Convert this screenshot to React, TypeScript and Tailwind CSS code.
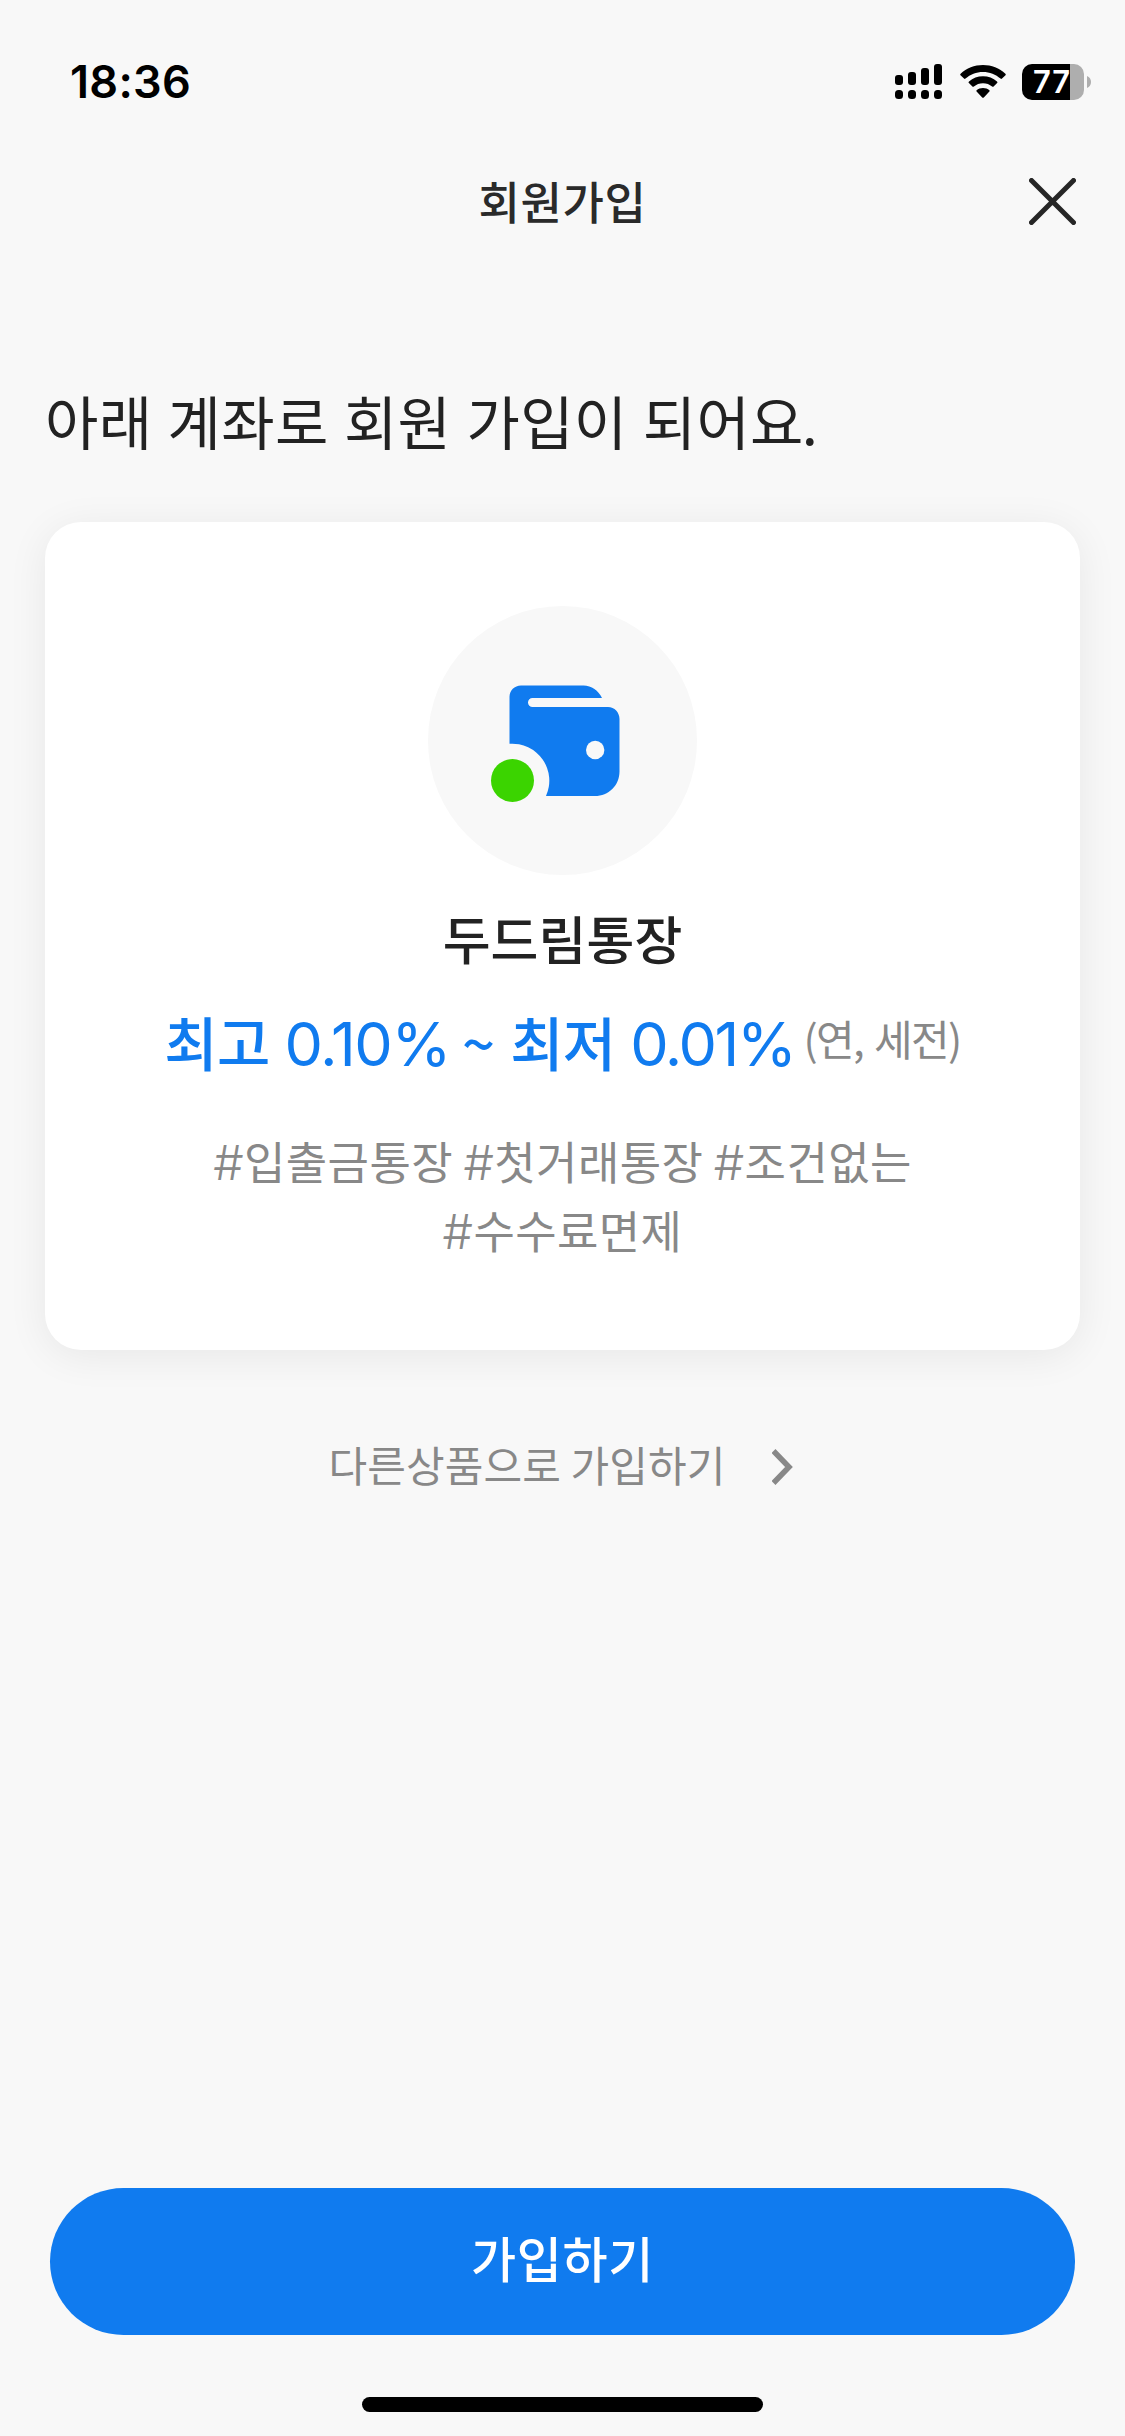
const KR = "font-['Noto_Sans_CJK_KR',sans-serif]";

function StatusBar() {
  return (
    <div className="flex h-[132px] shrink-0 items-center justify-between pt-[32px] pr-[34px] pl-[70px]">
      <span className="font-['Inter',sans-serif] text-[45px] leading-[60px] font-semibold tracking-[0.3px] text-black">
        18:36
      </span>
      <div className="flex items-center">
        <svg width="48" height="36" viewBox="0 0 48 36" fill="#000">
          <rect x="0" y="11" width="8" height="10" rx="3" />
          <rect x="13" y="8" width="8" height="13" rx="3" />
          <rect x="26" y="4" width="8" height="17" rx="3" />
          <rect x="39" y="0" width="8" height="21" rx="3" />
          <rect x="0" y="26" width="8" height="9" rx="3.5" />
          <rect x="13" y="26" width="8" height="9" rx="3.5" />
          <rect x="26" y="26" width="8" height="9" rx="3.5" />
          <rect x="39" y="26" width="8" height="9" rx="3.5" />
        </svg>
        <svg className="ml-[17px]" width="46" height="36" viewBox="0 0 46 36" fill="#000">
          <path d="M23 1C14.500 1 6.500 4.200 .6 9.700C.1 10.200 .1 10.800 .5 11.200L4 14.600C4.400 15 5 15 5.500 14.600C10.200 10.300 16.300 7.900 23 7.900S35.800 10.300 40.500 14.600C41 15 41.600 15 42 14.600L45.500 11.200C45.900 10.800 45.900 10.200 45.400 9.700C39.500 4.200 31.500 1 23 1Z" />
          <path d="M23 12.300C17.700 12.300 12.800 14.200 9 17.500C8.500 18 8.400 18.600 8.900 19L12.400 22.500C12.800 22.900 13.400 22.900 13.900 22.500C16.400 20.400 19.500 19.200 23 19.200S29.600 20.400 32.100 22.500C32.600 22.900 33.200 22.900 33.600 22.500L37.100 19C37.600 18.600 37.500 18 37 17.500C33.200 14.200 28.300 12.300 23 12.300Z" />
          <path d="M23 24C20.500 24 18.300 24.900 16.600 26.300C16.200 26.700 16.200 27.200 16.600 27.600L22.200 33.400C22.700 33.900 23.300 33.900 23.800 33.400L29.400 27.600C29.800 27.200 29.800 26.700 29.400 26.300C27.700 24.900 25.500 24 23 24Z" />
        </svg>
        <div className="ml-[16px] flex h-[36px] w-[62px] items-center overflow-hidden rounded-[10px] bg-[linear-gradient(to_right,#000_48px,#aeaeae_48px)]">
          <span className="pl-[11px] font-['Inter',sans-serif] text-[31px] leading-[36px] font-semibold tracking-[0.8px] text-white">
            77
          </span>
        </div>
        <svg className="ml-[3px]" width="4" height="12" viewBox="0 0 4 12" fill="#aeaeae">
          <path d="M0 0C2.500 1 4 3.300 4 6S2.500 11 0 12Z" />
        </svg>
      </div>
    </div>
  );
}

function Header() {
  return (
    <header className="grid h-[138px] shrink-0 grid-cols-[1fr_auto_1fr] items-center px-[49px]">
      <span />
      <h1 className="text-[45px] leading-[66px] font-medium tracking-[0.6px] text-[#2a2a2a]">회원가입</h1>
      <button className="justify-self-end" aria-label="닫기">
        <svg width="47" height="47" viewBox="0 0 47 47" stroke="#262626" strokeWidth="5" strokeLinecap="round">
          <path d="M2.500 2.500L44.500 44.500M44.500 2.500L2.500 44.500" />
        </svg>
      </button>
    </header>
  );
}

function WalletIcon() {
  return (
    <svg width="269" height="269" viewBox="0.5 0.5 269 269">
      <circle cx="135" cy="135" r="134.500" fill="#f8f8f8" />
      <path
        fill="#107bef"
        d="M82 91.500C82 85 87 80 93.500 80H156C164 80 171 85 174.500 92.500H105A4.500 4.500 0 0 0 105 101.500H180.500C187 101.500 192 107 192 113.500V166C192 180 181 190.500 167.500 190.500H118.500A37 37 0 0 0 82 138.300Z"
      />
      <circle cx="167.700" cy="144.500" r="9.200" fill="#f8f8f8" />
      <circle cx="85" cy="175" r="21.500" fill="#3bd400" />
    </svg>
  );
}

function Hash() {
  return <span className="font-['Inter',sans-serif] text-[48px] leading-none font-light">#</span>;
}

function ProductCard() {
  return (
    <section className="mx-[45px] flex h-[828px] shrink-0 flex-col items-center rounded-[36px] bg-white pt-[84px] shadow-[0_6px_40px_rgba(0,0,0,0.07)]">
      <WalletIcon />
      <h3 className="mt-[24px] text-[52px] leading-[78px] font-medium tracking-[0.1px] text-[#222]">두드림통장</h3>
      <div className="mt-[20px] flex h-[88px] items-center text-[58px] leading-[88px] font-medium tracking-[-0.8px] text-[#107bef]">
        <span>최고</span>
        <span className="mt-[6px] ml-[15px] font-['Inter',sans-serif] text-[61px] font-normal tracking-[-1.4px]">
          0.10%
        </span>
        <span className="ml-[12px]">~</span>
        <span className="ml-[16px]">최저</span>
        <span className="mt-[6px] ml-[15px] font-['Inter',sans-serif] text-[61px] font-normal tracking-[-2.4px]">
          0.01%
        </span>
        <span className="mb-[6px] ml-[9px] text-[42px] leading-[64px] font-normal tracking-[-1.6px] text-[#888] [word-spacing:3px]">
          (연, 세전)
        </span>
      </div>
      <p className="mt-[41px] text-center text-[45px] leading-[69px] tracking-[0.4px] text-[#888]">
        <Hash />
        입출금통장 <Hash />
        첫거래통장 <Hash />
        조건없는
        <br />
        <Hash />
        수수료면제
      </p>
    </section>
  );
}

export default function App() {
  return (
    <main className={`flex h-[2436px] w-[1125px] flex-col overflow-hidden bg-[#f8f8f8] ${KR}`}>
      <StatusBar />
      <Header />
      <h2 className="mt-[106px] mb-[58px] ml-[45px] text-[58px] leading-[88px] tracking-[0.3px] text-[#222] [word-spacing:2px]">
        아래 계좌로 회원 가입이 되어요<span className="-ml-[2px]">.</span>
      </h2>
      <ProductCard />
      <button className="mt-[82px] mr-[3px] flex items-center self-center text-[42px] leading-[64px] tracking-[0.1px] text-[#888]">
        다른상품으로 가입하기
        <svg className="mt-[6px] ml-[47px]" width="21" height="36" viewBox="0 0 21 36" fill="none" stroke="#888" strokeWidth="5.5">
          <path d="M1.500 2L17 18L1.500 34" />
        </svg>
      </button>
      <button className="mx-[50px] mt-auto h-[147px] shrink-0 rounded-full bg-[#107bef] pb-[10px] text-[49px] leading-[74px] font-medium tracking-[0.7px] text-white">
        가입하기
      </button>
      <div className="mt-[62px] mb-[24px] h-[15px] w-[401px] shrink-0 self-center rounded-full bg-black" />
    </main>
  );
}
